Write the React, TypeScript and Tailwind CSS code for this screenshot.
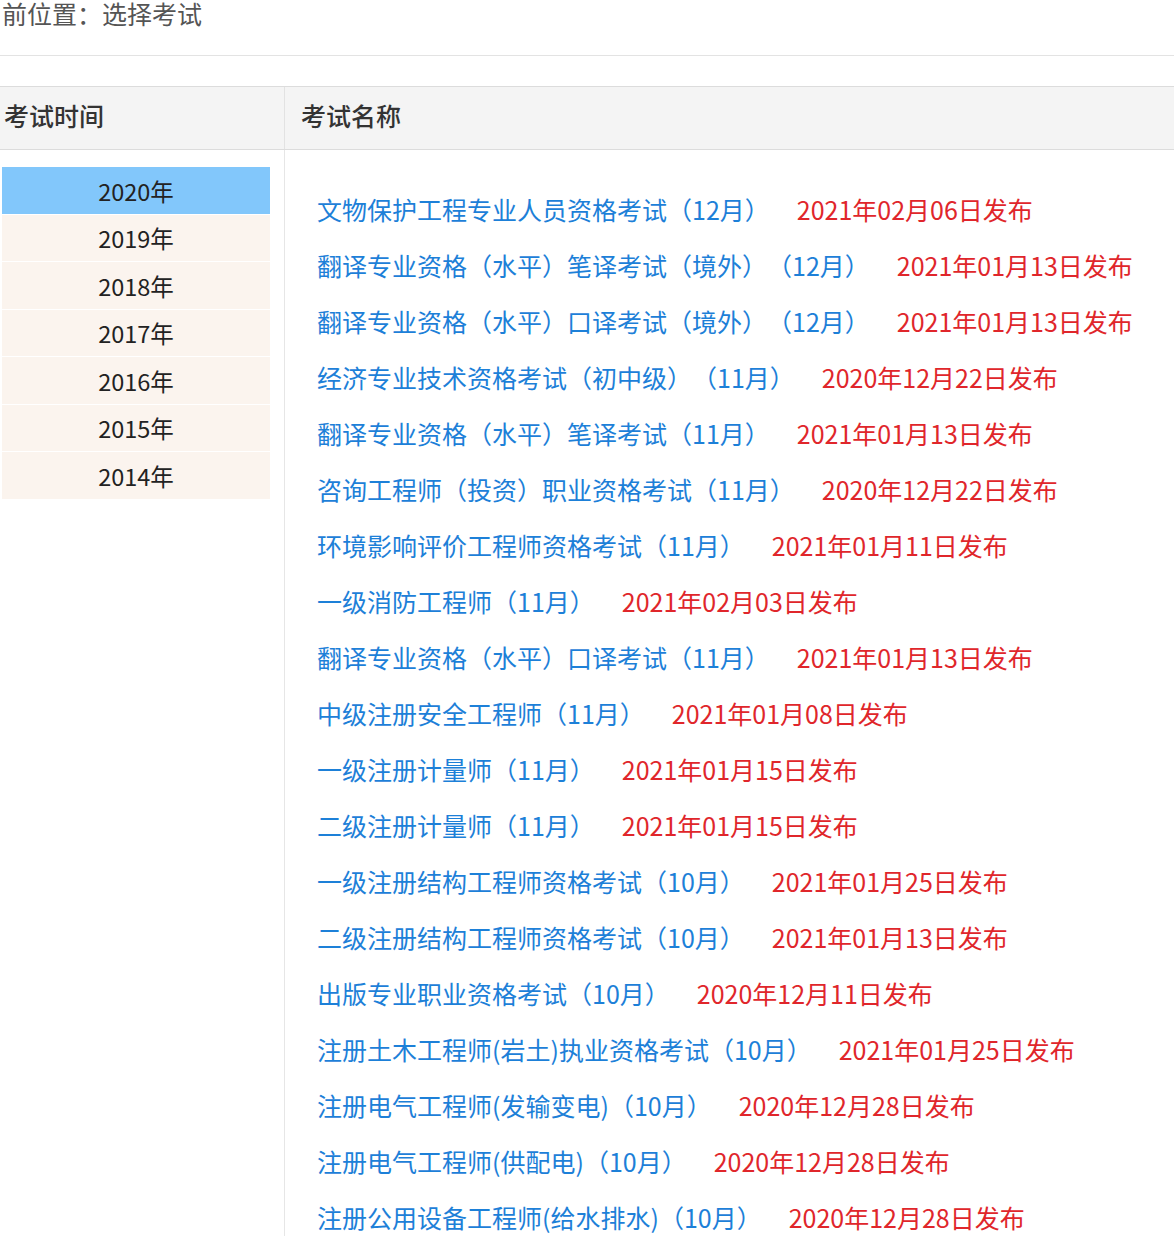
import React from "react";

const years = ["2020年", "2019年", "2018年", "2017年", "2016年", "2015年", "2014年"];

const exams: Array<{ name: string; date: string }> = [
  { name: "文物保护工程专业人员资格考试（12月）", date: "2021年02月06日发布" },
  { name: "翻译专业资格（水平）笔译考试（境外）（12月）", date: "2021年01月13日发布" },
  { name: "翻译专业资格（水平）口译考试（境外）（12月）", date: "2021年01月13日发布" },
  { name: "经济专业技术资格考试（初中级）（11月）", date: "2020年12月22日发布" },
  { name: "翻译专业资格（水平）笔译考试（11月）", date: "2021年01月13日发布" },
  { name: "咨询工程师（投资）职业资格考试（11月）", date: "2020年12月22日发布" },
  { name: "环境影响评价工程师资格考试（11月）", date: "2021年01月11日发布" },
  { name: "一级消防工程师（11月）", date: "2021年02月03日发布" },
  { name: "翻译专业资格（水平）口译考试（11月）", date: "2021年01月13日发布" },
  { name: "中级注册安全工程师（11月）", date: "2021年01月08日发布" },
  { name: "一级注册计量师（11月）", date: "2021年01月15日发布" },
  { name: "二级注册计量师（11月）", date: "2021年01月15日发布" },
  { name: "一级注册结构工程师资格考试（10月）", date: "2021年01月25日发布" },
  { name: "二级注册结构工程师资格考试（10月）", date: "2021年01月13日发布" },
  { name: "出版专业职业资格考试（10月）", date: "2020年12月11日发布" },
  { name: "注册土木工程师(岩土)执业资格考试（10月）", date: "2021年01月25日发布" },
  { name: "注册电气工程师(发输变电)（10月）", date: "2020年12月28日发布" },
  { name: "注册电气工程师(供配电)（10月）", date: "2020年12月28日发布" },
  { name: "注册公用设备工程师(给水排水)（10月）", date: "2020年12月28日发布" },
];

export default function App() {
  return (
    <div
      className="w-[1174px] h-[1236px] overflow-hidden bg-white [text-spacing-trim:space-all]"
      style={{ fontFamily: '"Noto Sans CJK SC", "Noto Sans", sans-serif' }}
    >
      {/* Breadcrumb */}
      <div className="h-[56px] border-b border-[#e3e3e3] overflow-hidden">
        <p className="-ml-[23px] -mt-[5px] text-[25px] leading-[36px] text-[#555555] whitespace-nowrap">
          当前位置：选择考试
        </p>
      </div>

      {/* Table header */}
      <div className="mt-[30px] grid grid-cols-[285px_1fr] h-[64px] bg-[#f4f4f4] border-t border-b border-[#dcdcdc]">
        <div className="border-r border-[#e2e2e2] flex items-center pl-[4px] pb-[5px] text-[25px] font-medium text-[#333333]">
          考试时间
        </div>
        <div className="flex items-center pl-[16px] pb-[5px] text-[25px] font-medium text-[#333333]">考试名称</div>
      </div>

      {/* Table body */}
      <div className="grid grid-cols-[285px_1fr] h-[1100px]">
        <div className="border-r border-[#e6e6e6] pt-[17px] pl-[2px] pr-[14px]">
          {years.map((y, i) => (
            <div
              key={y}
              className={`h-[47.5px] flex items-center justify-center pt-[2px] text-[23.5px] text-[#222222] border-b border-white ${
                i === 0 ? "bg-[#82c7fb]" : "bg-[#fbf4ee]"
              }`}
            >
              {y}
            </div>
          ))}
        </div>

        <div className="pt-[32px] pl-[32px]">
          {exams.map((e) => (
            <div key={e.name} className="h-[56px] flex items-center whitespace-nowrap text-[25px]">
              <span className="text-[#1d80d8]">{e.name}</span>
              <span className="ml-[27px] text-[#e0262b]">{e.date}</span>
            </div>
          ))}
        </div>
      </div>
    </div>
  );
}
